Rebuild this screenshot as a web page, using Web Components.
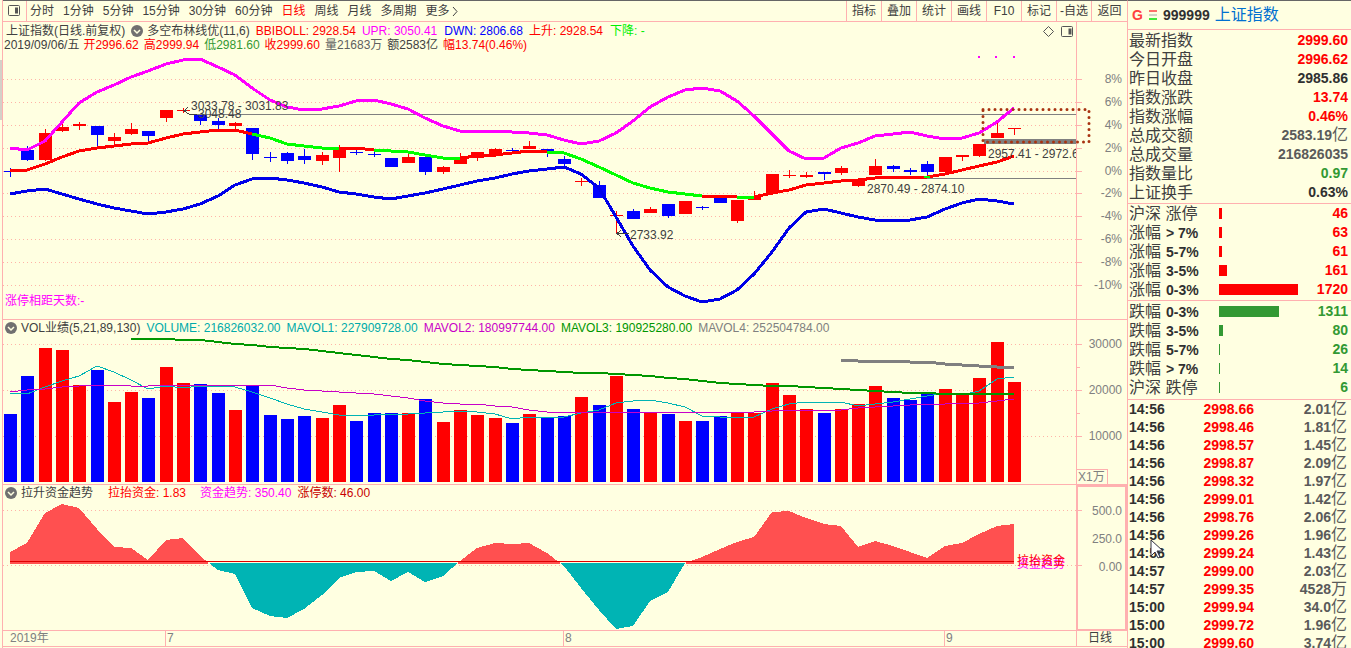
<!DOCTYPE html>
<html lang="zh-CN">
<head>
<meta charset="utf-8">
<title>上证指数 999999</title>
<style>
html,body{margin:0;height:100%}
body{background:#ffffe1;color:#404040;overflow:hidden;font:12px/14px "Liberation Sans","Noto Sans CJK SC",sans-serif;
--pink:#ffb0b0;--red:#ff0000;--blue:#0000ff;--green:#339933;--grey:#808080;--mag:#ff00ff;--teal:#00b4b4}
</style>
</head>
<body>
<stock-app></stock-app>
<script>
const define=(name,html,init)=>customElements.define(name,class extends HTMLElement{
  constructor(){super();this.attachShadow({mode:'open'}).innerHTML=typeof html==='function'?html(this):html}
  connectedCallback(){if(init)init(this,this.shadowRoot)}
});
const X=i=>Math.round(10+i*17.31);
const line=(ys,start=0)=>ys.map((y,k)=>X(k+start)+','+y).join(' ');
const poly=(ys,start,color,w)=>`<polyline points="${line(ys,start)}" fill="none" stroke="${color}" stroke-width="${w}"/>`;
const grid=ys=>ys.map(y=>`<path d="M3 ${y}.5H1076" stroke="#ffb4a8" stroke-dasharray="1 3" fill="none"/><path d="M1077 ${y}.5h5" stroke="#ffb0b0"/>`).join('');
const plotStyle=`:host{display:block;position:relative;width:100%;height:100%}svg{display:block;width:100%;height:100%;overflow:visible;shape-rendering:crispEdges}
.layer{position:absolute;inset:0;overflow:hidden}.layer span{position:absolute;white-space:nowrap}`;
const at=(x,y,top,h,text,color='#404040')=>`<span style="left:${(x-3)/10.73}%;top:${(y-top)/h*100}%;color:${color}">${text}</span>`;

/* candles: colour, body top, body bottom, wick high, wick low */
const candles=`b 171 172 168 177|b 150 160 146 161|r 133 160 129 161|r 127 131 124 132|r 124 126 122 130|b 126 135 126 147|r 137 141 133 144|r 129 134 123 135|b 131 136 131 142|r 110 118 110 122|r 110 111 108 113|b 115 121 115 125|b 121 125 118 129|r 123 126 122 130|b 128 154 128 160|b 157 158 152 162|b 153 161 152 164|b 156 160 149 164|r 155 161 152 165|r 150 158 145 172|b 152 153 150 155|b 154 155 152 157|b 158 167 158 167|r 157 163 154 163|b 157 172 157 175|r 167 172 166 174|r 159 164 153 164|r 152 158 152 161|r 149 155 148 157|b 150 151 148 153|r 146 149 141 149|b 149 151 149 157|b 159 164 156 167|r 181 182 178 186|b 185 198 181 198|r 215 216 211 233|b 211 219 209 219|r 209 213 207 213|b 204 216 204 218|r 201 214 201 214|b 207 208 206 210|b 197 203 197 203|r 200 221 200 223|r 196 200 191 200|r 174 193 174 195|r 175 176 170 178|r 175 177 172 178|b 172 174 172 180|r 168 173 166 175|r 179 186 179 187|r 166 175 159 175|b 166 169 165 172|b 170 172 168 175|b 164 172 161 175|r 157 172 157 174|r 155 157 155 161|r 144 156 144 157|r 133 138 121 138|r 128 129 128 135`.split('|').map(s=>s.split(' '));
const upper=[148,150,141,122,103,92,85,77,71,64,60,59,67,75,88,100,107,110,109,106,101,100,104,109,118,126,131,131,131,132,133,135,140,144,141,133,121,107,97,90,88,91,101,116,134,151,159,158,148,143,136,134,132,136,139,138,133,122,108];
const mid=[171,170,164,157,151,148,146,144,143,138,134,132,130,130,134,138,144,146,148,148,148,150,151,152,155,158,158,156,155,153,151,152,153,159,167,175,183,188,192,194,196,196,197,197,193,190,185,183,181,180,178,177,177,177,174,170,166,162,156];
const lower=[194,191,189,194,199,204,208,211,214,212,209,204,196,185,179,178,180,183,187,192,194,197,199,196,193,189,185,181,178,174,171,169,167,174,188,217,246,270,287,296,302,299,290,274,252,228,212,209,213,217,220,221,220,217,209,203,199,201,204];
const greens=[[14,19],[21,26],[31,40],[42,43]];
define('candle-chart',`<style>${plotStyle}</style>
<svg viewBox="3 22 1073 297" preserveAspectRatio="none">
${grid([79,102,125,148,171,193,216,239,262,285])}
<path d="M189 114.5H1076M858 178.5H1076" stroke="#808080"/>
${candles.map(([c,t,b,h,l],i)=>`<g fill="${c=='r'?'#ff0000':'#0000ff'}"><rect x="${X(i)-6}" y="${t}" width="13" height="${b-t}"/><rect x="${X(i)}" y="${h}" width="1" height="${l-h}"/></g>`).join('')}
${poly(mid,0,'#ff0000',3)}
${greens.map(([a,b])=>poly(mid.slice(a,b+1),a,'#00ff00',3)).join('')}
<rect x="924" y="176" width="6" height="2" fill="#00ff00"/>
${poly(upper,0,'#ff00ff',3)}${poly(lower,0,'#0000e8',3)}
<path d="M978 56h2v2h-2zM995 56h2v2h-2zM1013 56h2v2h-2z" fill="#ff00ff"/>
<path d="M984 139H1076V144H984z" fill="#808080"/>
<g style="shape-rendering:auto" fill="none" stroke="#a83210" stroke-width="3" stroke-linecap="round" stroke-dasharray="0 6"><path d="M983 109.5H1089V142H983z"/></g>
<path d="M617 233.5h12M621 230l-4 3.5 4 3.5M183 110.500h4M188 107l-4 4M184 111l5 3h4M190 114h7" fill="none" stroke="#404040"/>
<g style="shape-rendering:auto" fill="none" stroke="#555"><path d="M1048.500 26.500l5 5-5 5-5-5z"/><rect x="1061.500" y="26.500" width="11" height="10" rx="1"/><path d="M1070 28.500v6" stroke-width="3"/></g>
</svg>
<div class="layer">
${at(191,99,22,297,'3033.78 - 3031.83')}${at(198,107,22,297,'3048.48')}${at(630,228,22,297,'2733.92')}${at(867,182,22,297,'2870.49 - 2874.10')}${at(988,147,22,297,'2957.41 - 2972.60')}${at(5,294,22,297,'涨停相距天数:-','#ff00ff')}
</div>`);

const vols='b414 b376 r348 r350 r385 b370 r402 r392 b398 r367 r383 b384 b393 r410 b385 b415 b419 b416 r418 r405 b421 b413 b413 r413 b399 r422 r410 r415 r418 b423 r414 b417 b416 r397 b405 r376 b409 r413 b414 r421 b421 b416 r413 r413 r383 r395 r409 b413 r409 r404 r386 b398 b400 b394 r389 r395 r378 r342 r382'.split(' ');
define('volume-chart',`<style>${plotStyle}</style>
<svg viewBox="3 320 1073 164" preserveAspectRatio="none">
${grid([344,390,436])}<path d="M1077 367.500h3M1077 413.500h3" stroke="#ffb0b0"/>
${vols.map((v,i)=>`<rect x="${X(i)-6}" y="${v.slice(1)}" width="13" height="${482-v.slice(1)}" fill="${v[0]=='r'?'#ff0000':'#0000ff'}"/>`).join('')}
${poly([393,394,387,381,376,366,372,380,389,386,388,386,386,387,392,398,404,409,412,415,416,415,414,414,413,412,411,412,414,419,417,417,417,413,410,403,401,400,403,407,416,417,417,417,409,404,402,403,402,406,404,402,399,396,393,395,391,379,377],0,'#00b4b4',1)}
${poly([392,390,389,387,386,385,385,386,386,385,385,385,385,385,385,385,388,390,391,392,393,394,396,398,401,403,404,404,406,407,410,412,412,412,412,412,412,412,412,412,412,412,412,412,411,410,410,410,410,408,407,406,405,404,404,403,403,401,399],0,'#c800c8',1)}
${poly([339,339,339,340,340,342,344,345,347,348,349,351,353,355,357,359,360,362,364,365,366,367,369,370,371,372,373,373,374,375,376,378,379,381,383,384,385,386,386,387,388,389,390,391,392,393,393,394,394,394,394,394],7,'#009600',2)}
${poly([360,361,361,361,362,362,364,365,366,367,367],48,'#808080',3)}
</svg>`);

const trend=[552,543,513,504,508,529,547,548,560,540,538,556,570,574,608,616,618,609,595,578,572,571,581,572,582,576,561,548,543,544,543,553,566,588,610,629,626,601,592,563,557,549,542,537,512,511,518,524,526,547,541,546,552,558,546,543,534,526,524];
define('trend-chart',`<style>${plotStyle}</style>
<svg viewBox="3 485 1073 145" preserveAspectRatio="none">
<defs><clipPath id="up"><path d="M0 485H1076V563H0z"/></clipPath><clipPath id="down"><path d="M0 563H1076V631H0z"/></clipPath></defs>
${grid([510,565])}
<path clip-path="url(#up)" fill="#ff5050" d="M10 564L${line(trend)} 1014,564z"/>
<path fill="#ff5050" d="M10 562H208V564H10zM458 562H560V564H458zM686 562H1014V564H686z"/>
<path clip-path="url(#down)" fill="#00b4b4" d="M10 563L${line(trend)} 1014,563z"/>
<path d="M10 561.500H1014" stroke="#e00000"/>
</svg>
<div class="layer">${at(1017,557,485,145,'资金趋势','#ff00ff')}${at(1017,554,485,145,'拉抬资金','#ff0000')}</div>`);

define('fold-icon',`<style>:host{display:block;width:12px;height:12px}svg{display:block}</style><svg width="12" height="12"><circle cx="6" cy="6" r="6" fill="#707070"/><path d="M3 5l3 3 3-3" fill="none" stroke="#ffffe1" stroke-width="1.500"/></svg>`);
define('split-icon',`<style>:host{display:block}svg{display:block}</style><svg width="13" height="12"><rect x=".5" y=".5" width="11" height="10" rx="1" fill="none" stroke="#555"/><path d="M7 2.500h3v6H7z" fill="#555"/></svg>`);

define('chart-panel',`<style>
:host{display:grid;grid-template-columns:minmax(0,1fr) 51px;min-height:0;border-bottom:1px solid var(--pink);box-sizing:border-box;position:relative}
.plot{min-height:0;min-width:0}.axis{border-left:1px solid var(--pink);min-height:0}
.legend{position:absolute;left:1px;top:0;z-index:1}
</style><div class="plot"><slot></slot></div><div class="axis"><slot name="axis"></slot></div><div class="legend"><slot name="legend"></slot></div>`);

define('value-axis',el=>`<style>
:host{display:flex;flex-direction:column;height:100%;box-sizing:border-box;text-align:right;padding-right:5px;color:var(--grey);position:relative}
:host([kind=percent]){justify-content:space-between;padding-top:50px;padding-bottom:27px}
:host([kind=volume]){padding-top:17px;gap:32px}
:host([kind=trend]){padding-top:17px;padding-right:3px;gap:14px;border:2px solid var(--pink);border-left-width:1px;border-bottom-width:1px}
i{font-style:normal;position:absolute;left:0;bottom:0;border:solid var(--pink);border-width:1px 1px 0 0;padding:0 2px 0 1px}
</style>${el.getAttribute('values').split(' ').map(v=>`<span>${v}</span>`).join('')}${el.hasAttribute('unit')?`<i>${el.getAttribute('unit')}</i>`:''}`);

define('legend-row',`<style>:host{display:flex;align-items:center;white-space:nowrap;height:14px}</style><slot></slot>`);

define('tool-bar',()=>{
const left=['分时','1分钟','5分钟','15分钟','30分钟','60分钟','日线','周线','月线','多周期','更多﹥'];
const right=['指标','叠加','统计','画线','F10','标记','-自选','返回'];
return `<style>
:host{display:flex;border-top:1px solid #666;border-bottom:1px solid var(--pink);height:20px}
button{font:inherit;color:inherit;background:none;border:0;padding:0;line-height:20px;white-space:nowrap}
.toggle{width:24px;padding-left:5px;border-right:1px solid var(--pink);box-sizing:border-box}
.periods{display:flex;gap:9px;padding-left:3px;flex:1}
.on{color:var(--red)}
.tools{display:flex}.tools button{width:35px;box-sizing:border-box;border-left:1px solid var(--pink)}.tools button:last-child{width:36px}
svg{vertical-align:-1px;margin-left:2px}
</style>
<button class="toggle" aria-label="侧栏"><split-icon></split-icon></button>
<nav class="periods">${left.map(t=>`<button class="${t=='日线'?'on':''}">${t.replace('﹥','<svg width="6" height="9"><path d="M1 0l4 4.500-4 4.500" fill="none" stroke="#404040"/></svg>')}</button>`).join('')}</nav>
<nav class="tools">${right.map(t=>`<button>${t}</button>`).join('')}</nav>`});

define('date-axis',`<style>
:host{display:grid;grid-template-columns:minmax(0,1fr) 51px;height:16px;box-sizing:border-box;border-bottom:1px solid var(--pink);color:var(--grey);line-height:15px}
.days{display:grid;grid-template-columns:162fr 398fr 381fr 132fr}
.days span{padding-left:1px;border-left:1px solid var(--pink)}.days span:first-child{padding-left:7px;border:0}
button{font:inherit;color:#404040;background:none;border:0;border-left:1px solid var(--pink);padding:0 4px 0 0;line-height:15px}
</style><div class="days"><span>2019年</span><span>7</span><span>8</span><span>9</span></div><button>日线</button>`);

const quotes=[['最新指数','2999.60','r'],['今日开盘','2996.62','r'],['昨日收盘','2985.86','k'],['指数涨跌','13.74','r'],['指数涨幅','0.46%','r'],['总成交额','2583.19<b>亿</b>','d'],['总成交量','216826035','d'],['指数量比','0.97','g'],['上证换手','0.63%','k']];
const sideStyle=`:host{display:block;border-bottom:1px solid var(--pink);padding:1px 3px 0 1px}
table{width:100%;border-collapse:collapse;table-layout:fixed}
th,td{padding:0;font-weight:400;text-align:left;height:19px;line-height:19px;white-space:nowrap}th{font-size:16px}
.n{font-weight:700;font-size:14px;text-align:right}.r{color:var(--red)}.g{color:var(--green)}.k{color:#303030}.d{color:#5a5a5a}
b{font-weight:400;font-size:16px;line-height:18px}`;
define('quote-table',`<style>${sideStyle}:host{padding-bottom:1px}</style><table>${quotes.map(([a,b,c])=>`<tr><th scope="row">${a}</th><td class="n ${c}">${b}</td></tr>`).join('')}</table>`);

const breadth={up:[['沪深 涨停','',3,46],['涨幅','> 7%',3,63],['涨幅','5-7%',3,61],['涨幅','3-5%',8,161],['涨幅','0-3%',79,1720]],
down:[['跌幅','0-3%',60,1311],['跌幅','3-5%',4,80],['跌幅','5-7%',1,26],['跌幅','> 7%',1,14],['沪深 跌停','',1,6]]};
define('breadth-table',el=>{const k=el.getAttribute('side'),c=k=='up'?'r':'g';return `<style>${sideStyle}
:host{padding-top:0}:host([side=down]){padding-top:1px;padding-bottom:2px}:host([side=up]){padding-bottom:1px}
em{font:700 14px "Liberation Sans",sans-serif;color:#303030;margin-left:5px}
u{display:block;height:11px;background:currentColor}.l{width:90px}.v{width:48px}
</style><table><colgroup><col class="l"><col><col class="v"></colgroup>${breadth[k].map(r=>`<tr><th scope="row">${r[0]}${r[1]?`<em>${r[1]}</em>`:''}</th><td class="${c}"><u style="width:${r[2]}px"></u></td><td class="n ${c}">${r[3]}</td></tr>`).join('')}</table>`});

const ticks='14:56 2998.66 2.01亿|14:56 2998.46 1.81亿|14:56 2998.57 1.45亿|14:56 2998.87 2.09亿|14:56 2998.32 1.97亿|14:56 2999.01 1.42亿|14:56 2998.76 2.06亿|14:56 2999.26 1.96亿|14:56 2999.24 1.43亿|14:57 2999.00 2.03亿|14:57 2999.35 4528万|15:00 2999.94 34.0亿|15:00 2999.72 1.96亿|15:00 2999.60 3.74亿'.split('|').map(s=>s.split(' '));
define('tick-table',`<style>${sideStyle}
:host{border:0;padding:0 4px 0 1px}td{height:18px;line-height:18px}.n.k{text-align:left;width:50px}.n.r{width:75px}
</style><table>${ticks.map(([t,p,v])=>`<tr><td class="n k">${t}</td><td class="n r">${p}</td><td class="n d">${v.slice(0,-1)}<b>${v.slice(-1)}</b></td></tr>`).join('')}</table>`);

define('quote-panel',`<style>
:host{display:flex;flex-direction:column;border-left:1px solid var(--pink);border-top:1px solid #666;min-height:0;overflow:hidden;position:relative}
header{display:flex;align-items:center;height:28px;border-bottom:1px solid var(--pink);padding-left:4px;flex:none;font-size:14px;font-weight:700;color:#303030}
.g{color:#ff4040;width:17px}svg{margin-right:6px}
a{font-size:16px;font-weight:400;color:#0070d0;text-decoration:none;margin-left:5px;line-height:20px}
.mouse{position:absolute;left:22px;top:538px;margin:0}
</style>
<header><span class="g">G</span><svg width="8" height="10"><path d="M0 1h8" stroke="#ff4040" stroke-width="1.500"/><path d="M0 5h8" stroke="#aaa"/><path d="M0 9h8" stroke="#00e000" stroke-width="1.500"/></svg><span>999999</span><a href="#">上证指数</a></header>
<quote-table></quote-table><breadth-table side="up"></breadth-table><breadth-table side="down"></breadth-table><tick-table></tick-table>
<svg class="mouse" width="14" height="20"><path d="M1 1v16l4-4 3 6 2-1-3-6h6z" fill="#fff" stroke="#303040"/></svg>`);

const t=(s,c,g)=>`<span style="color:${c};margin-right:${g}px">${s}</span>`;
const R='#ff0000';
define('stock-app',`<style>
:host{display:grid;grid-template-columns:minmax(0,1fr) 224px;height:100vh}
.gutter{border-right:1px solid var(--pink);display:flex;flex-direction:column;padding-top:60px}.gutter i{height:60px;background:#d4d0c8}
main{display:grid;grid-template-columns:3px minmax(0,1fr);min-height:0}
.stack{display:grid;grid-template-rows:auto minmax(0,298fr) minmax(0,165fr) minmax(0,146fr) auto;min-height:0;padding-bottom:1px}
fold-icon{margin:0 4px 0 1px}.head{padding-top:2px}
</style>
<main><div class="gutter"><i></i></div><div class="stack">
<tool-bar></tool-bar>
<chart-panel><div slot="legend" class="head">
<legend-row>${t('上证指数(日线.前复权)','#404040',5).replace('style="','style="margin-left:2px;')}<fold-icon></fold-icon>${t('多空布林线优(11,6)','#404040',6)}${t('BBIBOLL: 2928.54',R,6)}${t('UPR: 3050.41','#ff00ff',7)}${t('DWN: 2806.68','#0000ff',6)}${t('上升: 2928.54',R,7)}${t('下降:-','#00f000',0).replace(':-',': -')}</legend-row>
<legend-row>${t('2019/09/06/五','#404040',4)}${t('开2996.62',R,5)}${t('高2999.94',R,5)}${t('低2981.60','#339933',5)}${t('收2999.60',R,5)}${t('量21683万','#606060',5)}${t('额2583亿','#404040',5)}${t('幅13.74(0.46%)',R,0)}</legend-row></div>
<candle-chart></candle-chart><value-axis slot="axis" kind="percent" values="8% 6% 4% 2% 0% -2% -4% -6% -8% -10%"></value-axis></chart-panel>
<chart-panel><legend-row slot="legend" style="margin-top:1px"><fold-icon></fold-icon>${t('VOL业绩(5,21,89,130)','#404040',6)}${t('VOLUME: 216826032.00','#00aaaa',6)}${t('MAVOL1: 227909728.00','#00aaaa',6)}${t('MAVOL2: 180997744.00','#c800c8',6)}${t('MAVOL3: 190925280.00','#009600',6)}${t('MAVOL4: 252504784.00','#808080',0)}</legend-row>
<volume-chart></volume-chart><value-axis slot="axis" kind="volume" values="30000 20000 10000" unit="X1万"></value-axis></chart-panel>
<chart-panel><legend-row slot="legend" style="margin-top:1px"><fold-icon></fold-icon>${t('拉升资金趋势','#404040',15)}${t('拉抬资金: 1.83',R,14)}${t('资金趋势: 350.40','#ff00ff',6)}${t('涨停数: 46.00','#c80000',0)}</legend-row>
<trend-chart></trend-chart><value-axis slot="axis" kind="trend" values="500.0 250.0 0.00"></value-axis></chart-panel>
<date-axis></date-axis>
</div></main><quote-panel></quote-panel>`);
</script>
</body>
</html>
